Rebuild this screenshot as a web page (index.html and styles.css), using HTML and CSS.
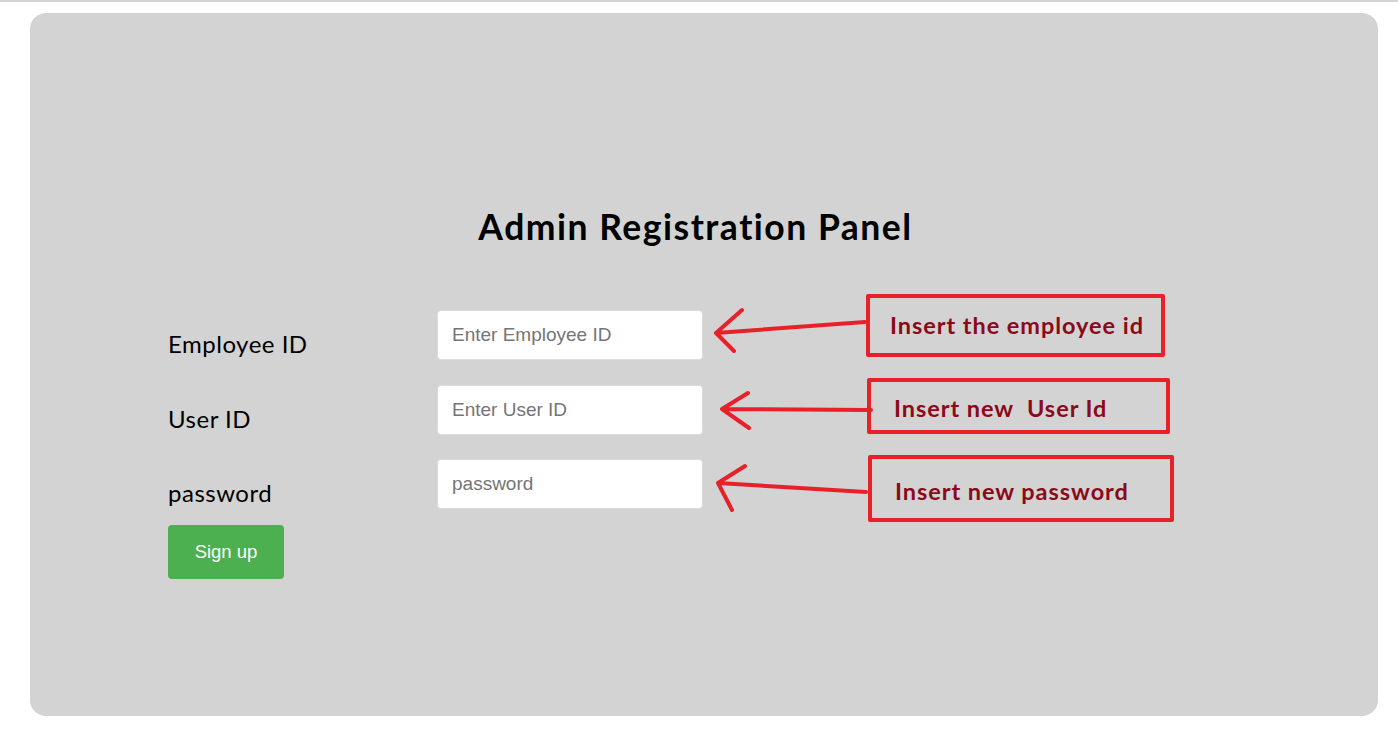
FILE: index.html
```html
<!DOCTYPE html>
<html>
<head>
<meta charset="utf-8">
<link rel="stylesheet" href="styles.css">
</head>
<body>
<div class="topline"></div>
<div class="panel">
  <h1 class="title">Admin Registration Panel</h1>
  <form class="form">
    <div class="row">
      <label class="label">Employee ID</label>
      <input class="field" type="text" placeholder="Enter Employee ID">
    </div>
    <div class="row">
      <label class="label">User ID</label>
      <input class="field" type="text" placeholder="Enter User ID">
    </div>
    <div class="row">
      <label class="label">password</label>
      <input class="field" type="password" placeholder="password">
    </div>
    <button class="btn" type="button">Sign up</button>
  </form>
</div>
<svg class="notes" width="1398" height="742" viewBox="0 0 1398 742" xmlns="http://www.w3.org/2000/svg">
  <g fill="none" stroke="#e8202a" stroke-width="4" stroke-linecap="round" stroke-linejoin="round">
    <rect x="868" y="296" width="295" height="59"/>
    <rect x="869" y="380" width="299" height="52"/>
    <rect x="870" y="457" width="302" height="63"/>
    <path d="M865 322 L716 333 M742 310 L716 333 L734 351"/>
    <path d="M871 410 L722 409 M748 393 L722 409 L749 428"/>
    <path d="M866 492 L718 483 M745 466 L718 483 L732 510"/>
  </g>
  <g class="note-text">
    <text x="890" y="334">Insert the employee id</text>
    <text x="894" y="417" xml:space="preserve">Insert new  User Id</text>
    <text x="895" y="500">Insert new password</text>
  </g>
</svg>
</body>
</html>
```
FILE: styles.css
```css
html, body {
  margin: 0;
  padding: 0;
  background: #ffffff;
}
body {
  position: relative;
  width: 1398px;
  height: 742px;
  overflow: hidden;
  font-family: Lato, "Open Sans", sans-serif;
}
.topline {
  height: 2px;
  background: #d3d3d3;
}
.panel {
  margin: 11px 20px 0 30px;
  height: 703px;
  background: #d3d3d3;
  border-radius: 16px;
  box-sizing: border-box;
  padding-top: 193px;
}
.title {
  margin: 0;
  padding-right: 17px;
  text-align: center;
  font-family: Lato, sans-serif;
  font-weight: 700;
  font-size: 35.5px;
  letter-spacing: 1.5px;
  line-height: 42px;
  color: #000;
}
.form {
  margin: 62px 0 0 138px;
  display: flex;
  flex-direction: column;
  align-items: flex-start;
}
.row {
  display: flex;
  align-items: flex-start;
  height: 50px;
  margin-bottom: 24.5px;
}
.row:last-of-type {
  margin-bottom: 16px;
}
.label {
  width: 269px;
  padding-top: 19px;
  font-family: Lato, sans-serif;
  font-size: 24px;
  letter-spacing: 0.5px;
  line-height: 29px;
  color: #000;
}
.field {
  width: 266px;
  height: 50px;
  box-sizing: border-box;
  border: 1px solid #dcdcdc;
  border-radius: 4px;
  background: #fff;
  padding: 0 14px;
  font-family: "Liberation Sans", Arial, sans-serif;
  font-size: 19px;
  color: #333;
  outline: none;
}
.field::placeholder {
  color: #757575;
}
.btn {
  width: 116px;
  height: 54px;
  border: none;
  border-radius: 4px;
  background: #4caf50;
  color: #fff;
  font-family: "Liberation Sans", Arial, sans-serif;
  font-size: 18.5px;
  padding: 0;
}
.notes {
  position: absolute;
  left: 0;
  top: 0;
  pointer-events: none;
}
.note-text {
  font-family: Lato, sans-serif;
  font-weight: 700;
  font-size: 23.5px;
  letter-spacing: 0.95px;
  fill: #8b0a1a;
}
```
